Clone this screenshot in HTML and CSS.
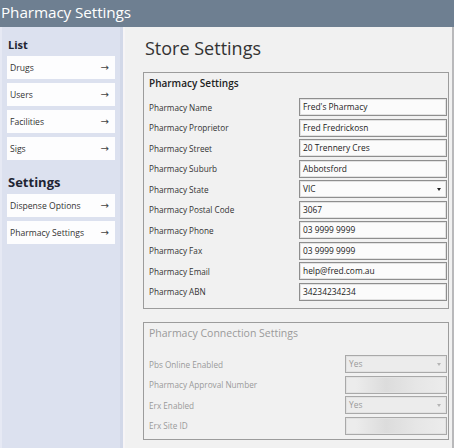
FILE: index.html
```html
<!DOCTYPE html>
<html lang="en">
<head>
    <meta charset="UTF-8">
    <title>Pharmacy Settings</title>
    <link rel="stylesheet" href="styles.css">
</head>
<body>
    <div class="titlebar">Pharmacy Settings</div>
    <div class="layout">
        <div class="sidebar">
            <div class="side-heading">List</div>
            <div class="nav-item"><span>Drugs</span><span class="arrow">&rarr;</span></div>
            <div class="nav-item"><span>Users</span><span class="arrow">&rarr;</span></div>
            <div class="nav-item"><span>Facilities</span><span class="arrow">&rarr;</span></div>
            <div class="nav-item"><span>Sigs</span><span class="arrow">&rarr;</span></div>
            <div class="side-heading big">Settings</div>
            <div class="nav-item"><span>Dispense Options</span><span class="arrow">&rarr;</span></div>
            <div class="nav-item"><span>Pharmacy Settings</span><span class="arrow">&rarr;</span></div>
        </div>
        <div class="main">
            <h1>Store Settings</h1>

            <div class="group">
                <div class="group-title">Pharmacy Settings</div>
                <div class="row"><label>Pharmacy Name</label><div class="field">Fred's Pharmacy</div></div>
                <div class="row"><label>Pharmacy Proprietor</label><div class="field">Fred Fredrickosn</div></div>
                <div class="row"><label>Pharmacy Street</label><div class="field">20 Trennery Cres</div></div>
                <div class="row"><label>Pharmacy Suburb</label><div class="field">Abbotsford</div></div>
                <div class="row"><label>Pharmacy State</label><div class="field select">VIC<span class="caret"></span></div></div>
                <div class="row"><label>Pharmacy Postal Code</label><div class="field">3067</div></div>
                <div class="row"><label>Pharmacy Phone</label><div class="field">03 9999 9999</div></div>
                <div class="row"><label>Pharmacy Fax</label><div class="field">03 9999 9999</div></div>
                <div class="row"><label>Pharmacy Email</label><div class="field">help@fred.com.au</div></div>
                <div class="row"><label>Pharmacy ABN</label><div class="field">34234234234</div></div>
            </div>

            <div class="group disabled">
                <div class="group-title">Pharmacy Connection Settings</div>
                <div class="row"><label>Pbs Online Enabled</label><div class="field short select">Yes<span class="caret"></span></div></div>
                <div class="row"><label>Pharmacy Approval Number</label><div class="field short blur"></div></div>
                <div class="row"><label>Erx Enabled</label><div class="field short select">Yes<span class="caret"></span></div></div>
                <div class="row"><label>Erx Site ID</label><div class="field short blur"></div></div>
            </div>
        </div>
    </div>
</body>
</html>
```

FILE: styles.css
```css
body {
    margin: 0;
    width: 454px;
    height: 448px;
    overflow: hidden;
    font-family: 'Open Sans', 'Noto Sans', sans-serif;
    background-color: #f1f1f1;
    color: #222;
}

.titlebar {
    height: 27px;
    line-height: 25px;
    background-color: #6e7f91;
    color: white;
    font-size: 15.3px;
    padding-left: 1px;
    letter-spacing: -0.1px;
}

.layout {
    display: flex;
    height: 421px;
}

.sidebar {
    width: 108px;
    padding: 0 5px 0 5px;
    background-color: #dce1ef;
    border-left: 2px solid #e6e9f4;
    border-right: 3px solid #d2d8e8;
}

.side-heading {
    font-size: 11px;
    font-weight: bold;
    color: #1f2533;
    padding: 10px 0 4px 1px;
}

.side-heading.big {
    font-size: 13px;
    padding: 9px 0 3px 1px;
}

.nav-item {
    display: flex;
    justify-content: space-between;
    align-items: center;
    height: 23px;
    margin-bottom: 4px;
    padding: 0 6px 0 3px;
    background-color: #fdfdfe;
    font-size: 8.6px;
    color: #333;
}

.nav-item .arrow {
    font-family: 'DejaVu Sans', sans-serif;
    font-size: 10px;
    color: #444;
}

.main {
    flex: 1;
    padding: 0 3px 0 18px;
    border-left: 2px solid #f6f4f6;
    border-right: 2px solid #b9b9bb;
}

h1 {
    margin: 9px 0 12px 2px;
    font-size: 18px;
    font-weight: normal;
    color: #333;
    height: 24px;
    line-height: 24px;
}

.group {
    border: 1px solid #9c9c9c;
    padding: 3px 1px 6px 5px;
    margin-bottom: 13px;
}

.group-title {
    font-size: 10px;
    font-weight: 600;
    color: #222;
    height: 15px;
    margin-bottom: 6px;
}

.row {
    display: flex;
    justify-content: space-between;
    align-items: center;
    height: 20.5px;
}

.row label {
    font-size: 8.2px;
    color: #333;
}

.field {
    box-sizing: border-box;
    width: 148px;
    height: 18px;
    line-height: 15px;
    border: 1px solid #8e8e8e;
    box-shadow: inset 0 0 0 1px #e2e2e2;
    background-color: #fbfbfb;
    font-size: 8.4px;
    padding-left: 3px;
    position: relative;
}

.field.short {
    width: 102px;
}

.caret {
    position: absolute;
    right: 5px;
    top: 7px;
    border-left: 2.5px solid transparent;
    border-right: 2.5px solid transparent;
    border-top: 3px solid #222;
}

.disabled {
    padding-bottom: 3px;
}

.disabled .group-title {
    font-weight: normal;
    font-size: 10.5px;
    margin-bottom: 13px;
}

.disabled .group-title,
.disabled .row label,
.disabled .field {
    color: #9a9a9a;
}

.disabled .field {
    border-color: #a9a9a9;
    background-color: #ececec;
}

.disabled .caret {
    border-top-color: #b5b5b5;
}

.field.blur {
    background: linear-gradient(90deg, #ececec 10%, #dcdcdc 40%, #e6e6e6 70%, #ececec);
}
```
